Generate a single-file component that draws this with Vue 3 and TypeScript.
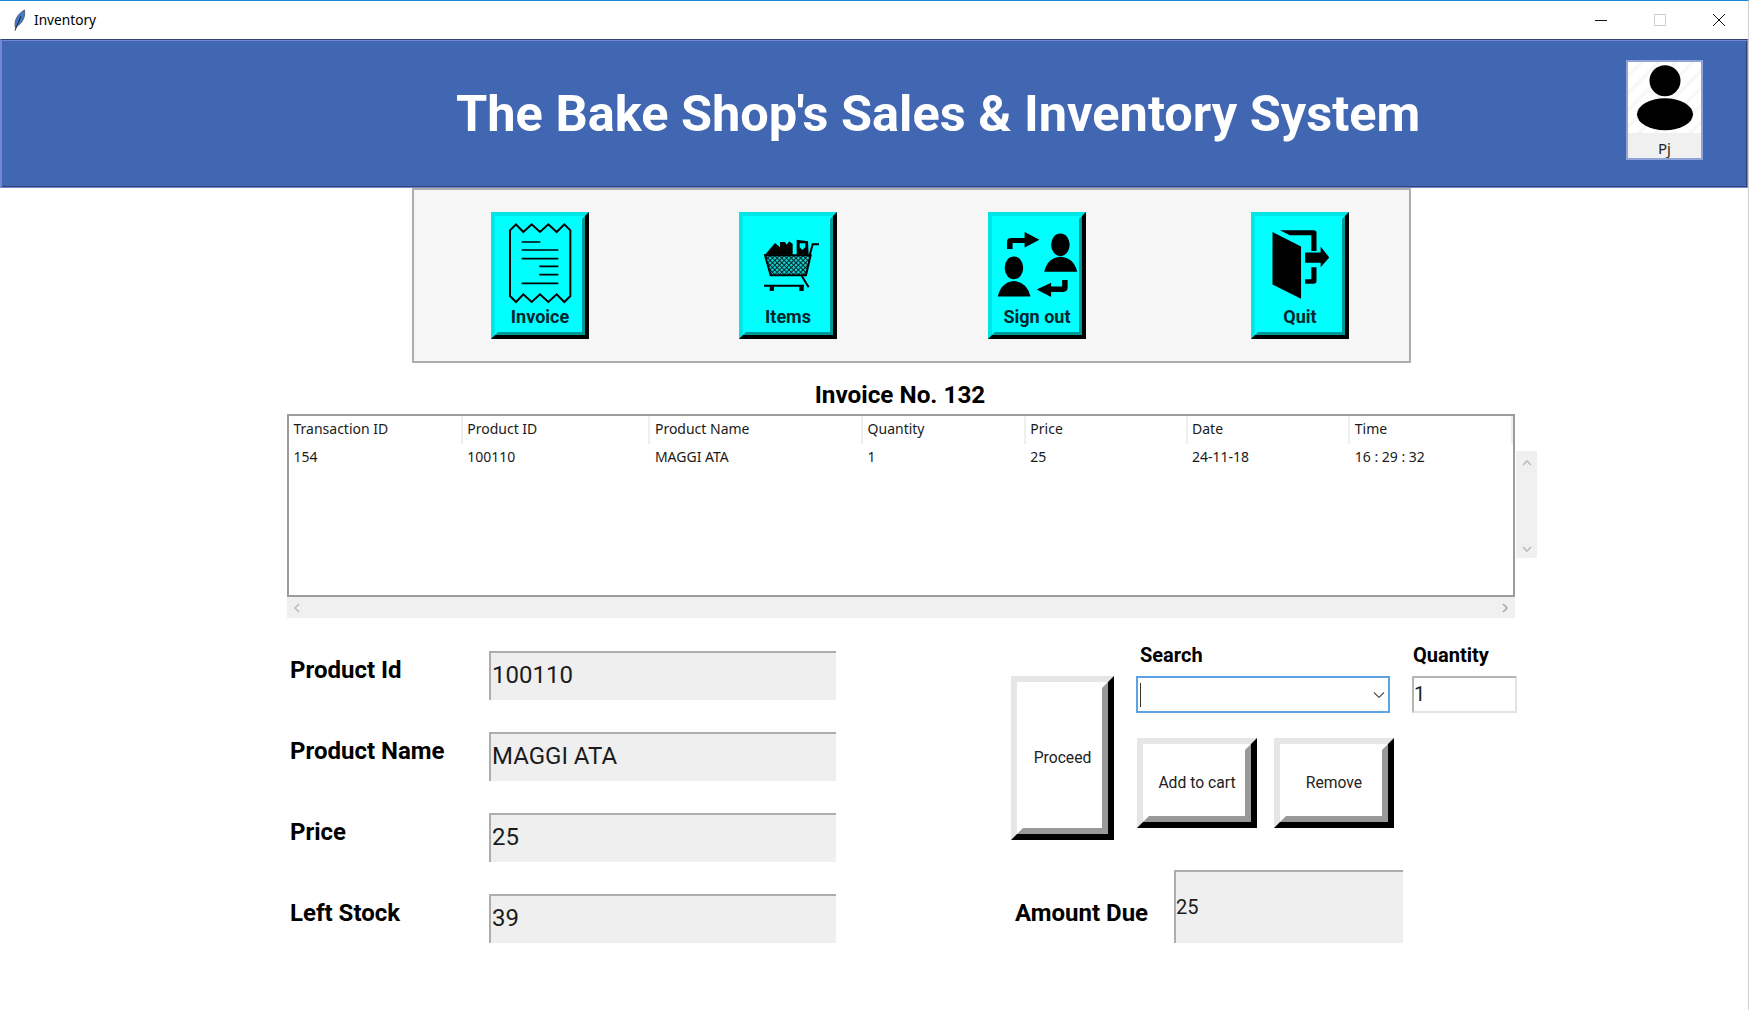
<script setup lang="ts">
const columns = [
  { label: 'Transaction ID', value: '154', width: 174 },
  { label: 'Product ID', value: '100110', width: 188 },
  { label: 'Product Name', value: 'MAGGI ATA', width: 213 },
  { label: 'Quantity', value: '1', width: 163 },
  { label: 'Price', value: '25', width: 162 },
  { label: 'Date', value: '24-11-18', width: 163 },
  { label: 'Time', value: '16 : 29 : 32', width: 163 },
]

const fields = [
  { label: 'Product Id', value: '100110' },
  { label: 'Product Name', value: 'MAGGI ATA' },
  { label: 'Price', value: '25' },
  { label: 'Left Stock', value: '39' },
]
</script>

<template>
  <div class="window">
    <div class="titlebar">
      <svg class="feather" width="14" height="22" viewBox="0 0 14 22">
        <path d="M3.5 19 C2 13 4 6 12.5 1 C13.5 8 10.5 14 5 17 Z" fill="#3f7ad0" stroke="#56606e" stroke-width="1" />
        <path d="M3 21.5 L9 7" stroke="#222" stroke-width="1" fill="none" />
      </svg>
      <span class="window-name">Inventory</span>
      <div class="controls">
        <svg width="14" height="14" viewBox="0 0 14 14"><path d="M1 7.5 H13" stroke="#111" stroke-width="1" /></svg>
        <svg width="14" height="14" viewBox="0 0 14 14"><rect x="1.5" y="1.5" width="11" height="11" fill="none" stroke="#cfcfcf" /></svg>
        <svg width="14" height="14" viewBox="0 0 14 14"><path d="M1 1 L13 13 M13 1 L1 13" stroke="#111" stroke-width="1" fill="none" /></svg>
      </div>
    </div>

    <header class="banner">
      <h1>The Bake Shop's Sales &amp; Inventory System</h1>
      <div class="avatar">
        <div class="avatar-pic">
          <svg width="73" height="71" viewBox="0 0 73 71">
            <circle cx="37" cy="18.7" r="15.5" fill="#000" />
            <ellipse cx="37" cy="52.3" rx="28" ry="16" fill="#000" />
          </svg>
        </div>
        <span>Pj</span>
      </div>
    </header>

    <div class="toolbar-row">
      <nav class="toolbar">
        <button class="tool">
          <svg viewBox="299 121 246 255">
            <path d="M332 155 L350 137 L372 160 L397 137 L422 160 L447 137 L472 160 L495 137 L513 155 V352 L495 370 L472 347 L447 370 L422 347 L397 370 L372 347 L350 370 L332 352 Z" fill="none" stroke="#000" stroke-width="6" />
            <path d="M367 190 H423 M367 214 H477 M367 240 H477 M420 263 H477 M420 288 H477 M367 314 H477" stroke="#000" stroke-width="5" fill="none" />
          </svg>
          <span>Invoice</span>
        </button>
        <button class="tool">
          <svg viewBox="1041 121 246 255">
            <defs>
              <pattern id="mesh" width="10" height="10" patternUnits="userSpaceOnUse" patternTransform="rotate(45)">
                <rect width="10" height="10" fill="#001f1f" />
                <rect width="7" height="7" fill="#12d8d8" />
              </pattern>
            </defs>
            <path d="M1095 230 H1232 L1218 290 H1112 Z" fill="url(#mesh)" stroke="#000" stroke-width="6" />
            <path d="M1095 228 L1125 193 L1150 214 V228 Z M1140 228 V190 L1155 190 L1160 198 L1168 188 L1178 196 V228 Z M1190 228 V183 L1224 188 L1226 228 Z" fill="#000" />
            <path d="M1199 194 H1216 V206 L1207 214 L1199 206 Z" fill="#00f5f5" />
            <path d="M1092 321 H1212 M1204 290 L1226 326 M1229 230 L1238 197 H1257" stroke="#000" stroke-width="6" fill="none" />
            <path d="M1109 323 H1122 V337 H1109 Z M1198 323 H1211 V337 H1198 Z" fill="#000" />
          </svg>
          <span>Items</span>
        </button>
        <button class="tool">
          <svg viewBox="340 120 238 247">
            <ellipse cx="527" cy="195" rx="27" ry="33" fill="#000" />
            <path d="M480 273 Q490 232 527 230 Q565 232 576 273 Z" fill="#000" />
            <ellipse cx="392" cy="262" rx="27" ry="33" fill="#000" />
            <path d="M345 345 Q355 303 392 300 Q430 303 440 345 Z" fill="#000" />
            <path d="M372 207 V185 Q372 175 385 175 H423 V158 L466 180 L423 203 V190 H388 V207 Z" fill="#000" />
            <path d="M548 297 V320 Q548 332 535 332 H500 V347 L458 325 L500 305 V316 H532 V297 Z" fill="#000" />
          </svg>
          <span>Sign out</span>
        </button>
        <button class="tool">
          <svg viewBox="1101 120 238 247">
            <path d="M1140 158 L1223 200 V352 L1140 310 Z" fill="#000" />
            <path d="M1162 153 H1260 Q1268 153 1268 161 V213 H1253 V167 H1190 Z" fill="#000" />
            <path d="M1235 217 H1280 V200 L1305 232 L1280 260 V247 H1235 Z" fill="#000" />
            <path d="M1253 260 H1268 V300 Q1268 308 1260 308 H1235 V295 H1253 Z" fill="#000" />
          </svg>
          <span>Quit</span>
        </button>
      </nav>
    </div>

    <section class="invoice">
      <h2>Invoice No. 132</h2>
      <div class="table-wrap">
        <div class="table-col">
          <div class="table">
            <div class="thead">
              <div v-for="c in columns" :key="c.label" class="cell th" :style="{ width: c.width + 'px' }">{{ c.label }}</div>
            </div>
            <div class="tbody">
              <div v-for="c in columns" :key="c.label" class="cell" :style="{ width: c.width + 'px' }">{{ c.value }}</div>
            </div>
          </div>
          <div class="hscroll">
            <svg width="10" height="12" viewBox="0 0 10 12"><path d="M7 2 L3 6 L7 10" fill="none" stroke="#bdbdbd" stroke-width="1.6" /></svg>
            <svg width="10" height="12" viewBox="0 0 10 12"><path d="M3 2 L7 6 L3 10" fill="none" stroke="#a8a8a8" stroke-width="1.6" /></svg>
          </div>
        </div>
        <div class="vscroll">
          <svg width="12" height="10" viewBox="0 0 12 10"><path d="M2 7 L6 3 L10 7" fill="none" stroke="#bdbdbd" stroke-width="1.6" /></svg>
          <svg width="12" height="10" viewBox="0 0 12 10"><path d="M2 3 L6 7 L10 3" fill="none" stroke="#bdbdbd" stroke-width="1.6" /></svg>
        </div>
      </div>
    </section>

    <section class="bottom">
      <div class="fields">
        <template v-for="f in fields" :key="f.label">
          <label class="field-label">{{ f.label }}</label>
          <div class="readout">{{ f.value }}</div>
        </template>
      </div>
      <div class="side">
        <div class="side-top">
          <button class="bevel proceed"><span>Proceed</span></button>
          <div class="search-grid">
            <label class="small-label">Search</label>
            <label class="small-label">Quantity</label>
            <div class="combo">
              <i class="caret"></i>
              <svg width="12" height="8" viewBox="0 0 12 8"><path d="M1 1.5 L6 6.5 L11 1.5" fill="none" stroke="#555" stroke-width="1.2" /></svg>
            </div>
            <div class="qty">1</div>
            <div class="actions">
              <button class="bevel"><span>Add to cart</span></button>
              <button class="bevel"><span>Remove</span></button>
            </div>
          </div>
        </div>
        <div class="amount">
          <label class="field-label amount-label">Amount Due</label>
          <div class="amount-box">25</div>
        </div>
      </div>
    </section>
  </div>
</template>

<style>
body {
  margin: 0;
  background: #fff;
}
</style>

<style scoped>
.window {
  width: 1749px;
  height: 1010px;
  box-sizing: border-box;
  background: #fff;
  border-top: 1px solid #1a86d9;
  border-right: 1px solid #d0d0d0;
  font-family: Roboto, sans-serif;
  color: #000;
  overflow: hidden;
}

.titlebar {
  height: 38px;
  display: flex;
  align-items: center;
  padding-left: 12px;
}

.window-name {
  margin-left: 8px;
  margin-top: -2px;
  font: 13.7px "Noto Sans", sans-serif;
}

.controls {
  margin-left: auto;
  margin-right: 22px;
  display: flex;
  gap: 45px;
}

.banner {
  height: 149px;
  box-sizing: border-box;
  background: #4267b2;
  border-top: 1px solid #2f4474;
  border-left: 2px solid #7088d6;
  border-right: 1px solid #7088d6;
  border-bottom: 1px solid #7088d6;
  box-shadow: inset 0 1px 0 #7088d6, inset -1px 0 0 #2f4474, inset 0 -1px 0 #2f4474;
  display: flex;
  align-items: center;
  padding-left: 454px;
  padding-right: 44px;
}

.banner h1 {
  margin: 0;
  color: #fff;
  font-size: 50.5px;
  font-weight: 700;
  white-space: nowrap;
}

.avatar {
  margin-left: auto;
  margin-bottom: 7px;
  width: 77px;
  height: 100px;
  box-sizing: border-box;
  border: 2px solid #8fa3d8;
  background: #f0f0f0;
  display: flex;
  flex-direction: column;
  align-items: center;
}

.avatar-pic {
  width: 100%;
  height: 71px;
  background: repeating-linear-gradient(135deg, #fff 0 8px, #f8f8f8 8px 12px);
}

.avatar-pic svg {
  display: block;
}

.avatar span {
  margin-top: 5px;
  font: 15px "Noto Sans", sans-serif;
  color: #222;
}

.toolbar-row {
  padding-left: 412px;
}

.toolbar {
  width: 999px;
  height: 175px;
  box-sizing: border-box;
  background: #f6f6f6;
  border: 2px solid #adadad;
  padding: 22px 0 0 77px;
  display: grid;
  grid-template-columns: 248px 249px 263px 98px;
  align-items: start;
}

.tool {
  position: relative;
  width: 98px;
  height: 127px;
  box-sizing: border-box;
  padding: 0;
  background: #00ffff;
  border-style: solid;
  border-width: 4px;
  border-color: #00e6e6 #000 #000 #00e6e6;
  display: flex;
  flex-direction: column;
  align-items: center;
  font: 700 18px Roboto, sans-serif;
  color: #00262c;
}

.tool::after {
  content: '';
  position: absolute;
  inset: 0;
  border-style: solid;
  border-width: 3px;
  border-color: #00ffff #009999 #009999 #00ffff;
}

.tool svg {
  width: 82px;
  height: 85px;
  margin: 3px 4px 0;
  flex: none;
  overflow: visible;
}

.tool span {
  line-height: 22px;
  margin-top: 2px;
}

.invoice {
  padding-left: 287px;
}

.invoice h2 {
  width: 1226px;
  height: 51px;
  margin: 0;
  font-size: 24.3px;
  font-weight: 700;
  line-height: 64px;
  text-align: center;
}

.table-wrap {
  display: flex;
  align-items: flex-start;
}

.table-col {
  width: 1228px;
}

.table {
  height: 183px;
  box-sizing: border-box;
  border: 2px solid #9c9c9c;
  font: 14px "Noto Sans", sans-serif;
  color: #1a1a1a;
}

.thead,
.tbody {
  display: flex;
}

.thead {
  height: 28px;
}

.tbody {
  height: 26px;
}

.cell {
  box-sizing: border-box;
  padding-left: 4.5px;
  line-height: 26px;
}

.th {
  border-right: 2px solid #efefef;
  line-height: 26px;
}

.hscroll {
  height: 21px;
  background: #f0f0f0;
  display: flex;
  align-items: center;
  justify-content: space-between;
  padding: 0 5px;
}

.vscroll {
  width: 21px;
  height: 107px;
  margin: 37px 0 0 1px;
  background: #f0f0f0;
  display: flex;
  flex-direction: column;
  align-items: center;
  justify-content: space-between;
  padding: 7px 0 4px;
  box-sizing: border-box;
}

.bottom {
  display: flex;
  padding: 33px 0 0 290px;
}

.fields {
  display: grid;
  grid-template-columns: 199px 347px;
  grid-auto-rows: 49px;
  row-gap: 32px;
  width: 721px;
}

.field-label {
  font-size: 24px;
  font-weight: 700;
  line-height: 39px;
}

.readout {
  box-sizing: border-box;
  background: #efefef;
  border-top: 2px solid #adadad;
  border-left: 2px solid #adadad;
  padding-left: 1px;
  font-size: 24px;
  line-height: 44px;
  color: #1c1c1c;
}

.side {
  margin-top: -7px;
}

.side-top {
  display: flex;
  gap: 22px;
}

.bevel {
  position: relative;
  box-sizing: border-box;
  padding: 0 0 2px;
  width: 120px;
  height: 90px;
  background: #fff;
  border-style: solid;
  border-width: 6px;
  border-color: #e6e6e6 #000 #000 #e6e6e6;
  font: 15.7px Roboto, sans-serif;
  color: #222;
}

.bevel::after {
  content: '';
  position: absolute;
  inset: 0;
  border-style: solid;
  border-width: 6px;
  border-color: #fff #999 #999 #fff;
}

.proceed {
  width: 103px;
  height: 164px;
  margin-top: 32px;
}

.search-grid {
  display: grid;
  grid-template-columns: 254px 105px;
  grid-template-rows: 32px 37px auto;
  column-gap: 22px;
}

.small-label {
  font-size: 20px;
  font-weight: 700;
  line-height: 22px;
  padding-left: 4px;
}

.small-label + .small-label {
  padding-left: 1px;
}

.combo {
  box-sizing: border-box;
  border: 2px solid #5aa4e6;
  display: flex;
  align-items: center;
  justify-content: space-between;
  padding: 0 3px 0 2px;
}

.caret {
  width: 1px;
  height: 24px;
  background: #333;
}

.qty {
  box-sizing: border-box;
  border: 2px solid #e3e3e3;
  border-top-color: #b5b5b5;
  border-left-color: #b5b5b5;
  font-size: 20px;
  line-height: 33px;
  padding-left: 0;
  color: #1c1c1c;
}

.actions {
  grid-column: 1 / 3;
  margin: 25px 0 0 1px;
  display: flex;
  gap: 17px;
}

.amount {
  display: flex;
  align-items: flex-start;
  margin-top: 30px;
}

.amount-label {
  width: 163px;
  margin-top: 24px;
  padding-left: 4px;
  box-sizing: border-box;
}

.amount-box {
  width: 229px;
  height: 73px;
  box-sizing: border-box;
  background: #efefef;
  border-top: 2px solid #adadad;
  border-left: 2px solid #adadad;
  padding-left: 0;
  font-size: 20px;
  line-height: 70px;
  color: #1c1c1c;
}
</style>
